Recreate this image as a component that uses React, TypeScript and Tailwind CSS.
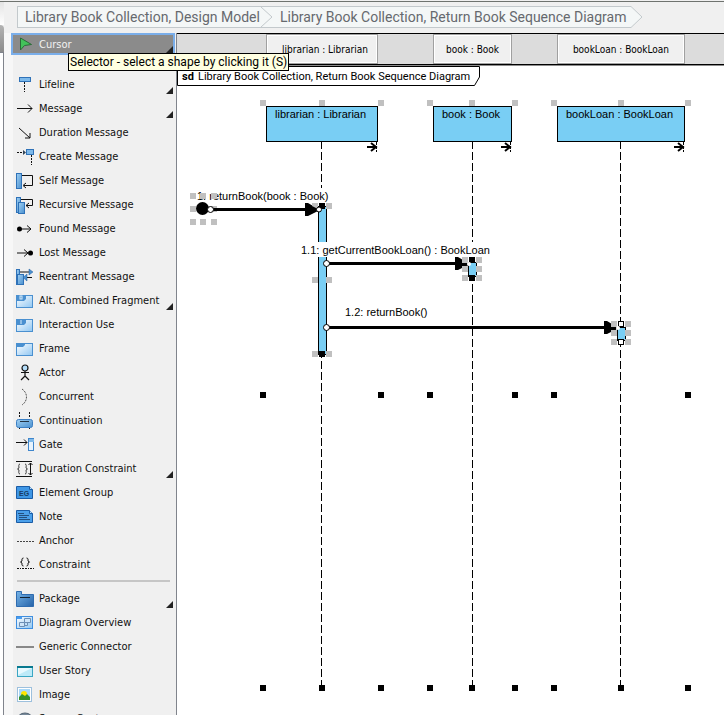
import type { ReactNode } from "react";

const BLUE = "#79cef4";

type Tool = { label: string; icon: ReactNode; more?: boolean };

function Icon({ children }: { children: ReactNode }) {
  return (
    <svg width="18" height="18" viewBox="0 0 18 18" fill="none" stroke="#111" className="shrink-0" aria-hidden="true">
      {children}
    </svg>
  );
}

function Gradients() {
  return (
    <svg width="0" height="0" className="absolute" aria-hidden="true">
      <defs>
        <linearGradient id="bar" x1="0" y1="0" x2="1" y2="1">
          <stop offset="0" stopColor="#9fd0f3" />
          <stop offset="1" stopColor="#4a90cf" />
        </linearGradient>
        <linearGradient id="pale" x1="0" y1="0" x2="1" y2="1">
          <stop offset="0" stopColor="#ffffff" />
          <stop offset="1" stopColor="#8fc6f2" />
        </linearGradient>
        <linearGradient id="folder" x1="0" y1="0" x2="1" y2="1">
          <stop offset="0" stopColor="#77b5e8" />
          <stop offset="1" stopColor="#2562a8" />
        </linearGradient>
      </defs>
    </svg>
  );
}

function FrameIcon({ mark }: { mark?: ReactNode }) {
  return (
    <Icon>
      <rect x="0.5" y="3.5" width="16" height="12" fill="url(#pale)" stroke="#4a90d0" />
      <path d={mark ? "M1 3h9v4l-2 2H1z" : "M1 3h8v2l-2 2H1z"} fill="#4a90d0" stroke="none" />
      {mark}
    </Icon>
  );
}

const tools: Tool[] = [
  {
    label: "Lifeline",
    more: true,
    icon: (
      <Icon>
        <rect x="3.5" y="1.5" width="11" height="4" fill="#7db9ea" stroke="#2f72b8" />
        <path d="M8.5 6v10" strokeDasharray="2 1" />
      </Icon>
    ),
  },
  {
    label: "Message",
    more: true,
    icon: (
      <Icon>
        <path d="M1 8.5h15M12 4.5l4 4-4 4" />
      </Icon>
    ),
  },
  {
    label: "Duration Message",
    icon: (
      <Icon>
        <path d="M3 4l11 10M14 9v5h-5" />
      </Icon>
    ),
  },
  {
    label: "Create Message",
    icon: (
      <Icon>
        <path d="M1 4.5h6" strokeDasharray="2 1" />
        <path d="M7 2l3 2.5-3 2.5z" fill="#345" stroke="none" />
        <rect x="10.5" y="1.5" width="7" height="5" fill="#7db9ea" stroke="#2f72b8" />
        <path d="M15.5 7v10" strokeDasharray="2 1" />
      </Icon>
    ),
  },
  {
    label: "Self Message",
    icon: (
      <Icon>
        <rect x="0.5" y="1.5" width="5" height="15" fill="url(#bar)" stroke="#2f72b8" />
        <path d="M6 3.5h10.500v10H8M10 11l-3 2.500 3 2.500" />
      </Icon>
    ),
  },
  {
    label: "Recursive Message",
    icon: (
      <Icon>
        <rect x="0.5" y="1.5" width="4" height="15" fill="url(#bar)" stroke="#2f72b8" />
        <rect x="2.5" y="6.5" width="6" height="11" fill="url(#bar)" stroke="#2f72b8" />
        <path d="M5 3.5h11.500v6H10M13 7l-3 2.500 3 2.500" />
      </Icon>
    ),
  },
  {
    label: "Found Message",
    icon: (
      <Icon>
        <circle cx="3.5" cy="9" r="2.500" fill="#000" stroke="none" />
        <path d="M5 9h10M11 5.500l4 3.500-4 3.500" />
      </Icon>
    ),
  },
  {
    label: "Lost Message",
    icon: (
      <Icon>
        <circle cx="14.5" cy="9" r="2.500" fill="#000" stroke="none" />
        <path d="M1 9h11M8 5.500l4 3.500-4 3.500" />
      </Icon>
    ),
  },
  {
    label: "Reentrant Message",
    icon: (
      <Icon>
        <rect x="0.5" y="1.5" width="3" height="15" fill="url(#bar)" stroke="#2f72b8" />
        <rect x="1.5" y="6.5" width="6" height="10" fill="url(#bar)" stroke="#2f72b8" />
        <path d="M4 4h10M8 9.500h8" />
        <path d="M13 1l4 3-4 3zM11 6v7l-4-3.500z" fill="#4a90cf" stroke="#235f9e" strokeWidth=".5" />
      </Icon>
    ),
  },
  {
    label: "Alt. Combined Fragment",
    more: true,
    icon: <FrameIcon mark={<rect x="4" y="4" width="2" height="3" stroke="#d5ebfb" />} />,
  },
  { label: "Interaction Use", icon: <FrameIcon mark={<path d="M5 4v4" stroke="#d5ebfb" />} /> },
  { label: "Frame", icon: <FrameIcon /> },
  {
    label: "Actor",
    icon: (
      <Icon>
        <circle cx="9" cy="4" r="3" fill="#b5defa" strokeWidth="1.200" />
        <path d="M9 7v5M5 8.500h8M9 12l-4 4M9 12l4 4" strokeWidth="1.200" />
      </Icon>
    ),
  },
  {
    label: "Concurrent",
    icon: (
      <Icon>
        <path d="M6 1c6 4 6 12 0 16" stroke="#555" strokeDasharray="2 1" />
      </Icon>
    ),
  },
  {
    label: "Continuation",
    icon: (
      <Icon>
        <path d="M3.500 0v6M13.500 0v6M3.500 15v3M13.500 15v3" strokeDasharray="2 1" />
        <rect x="0.500" y="7.500" width="16" height="8" rx="2" fill="url(#bar)" stroke="#3b7fc4" />
        <path d="M4 9.500h9" stroke="#234" />
      </Icon>
    ),
  },
  {
    label: "Gate",
    icon: (
      <Icon>
        <path d="M0 6.500h11M8 3.500l3 3-3 3" />
        <rect x="12.500" y="2.500" width="5" height="12" fill="#e7f3fd" stroke="#3f86cc" />
        <rect x="13" y="3" width="5" height="3" fill="#7db9ea" stroke="none" />
      </Icon>
    ),
  },
  {
    label: "Duration Constraint",
    more: true,
    icon: (
      <Icon>
        <path d="M0 1.500h16M0 16.500h16" />
        <path d="M4 4c-2 0-1 3-1 4l-1.500 1L3 10c0 1-1 4 1 4M9 4c2 0 1 3 1 4l1.500 1L10 10c0 1 1 4-1 4" stroke="#444" />
        <path d="M14.500 3v12M12.500 5l2-2 2 2M12.500 13l2 2 2-2" />
      </Icon>
    ),
  },
  {
    label: "Element Group",
    icon: (
      <Icon>
        <path d="M.5 2.500h13l3 3v9H.5z" fill="#3f97e6" stroke="#1a5ca6" />
        <path d="M13.500 2.500v3h3" fill="#bfe0fa" stroke="#1a5ca6" />
        <text x="3" y="12" fontSize="7" fontFamily="Liberation Sans, sans-serif" fontWeight="bold" fill="#173a63" stroke="none">EG</text>
      </Icon>
    ),
  },
  {
    label: "Note",
    icon: (
      <Icon>
        <path d="M.5 2.500h13l3 3v9H.5z" fill="#4ba0ea" stroke="#1a5ca6" />
        <path d="M13.500 2.500v3h3" fill="#bfe0fa" stroke="#1a5ca6" />
        <path d="M2 5.500h6M3 7.500h10M3 9.500h8M3 11.500h11" stroke="#24507f" />
      </Icon>
    ),
  },
  {
    label: "Anchor",
    icon: (
      <Icon>
        <path d="M1 9.500h17" stroke="#444" strokeDasharray="2 1" />
      </Icon>
    ),
  },
  {
    label: "Constraint",
    icon: (
      <Icon>
        <path d="M7.500 2c-2 0-1.500 2-1.500 3l-1.500 1L6 7c0 1-.5 3 1.500 3M10.500 2c2 0 1.500 2 1.500 3l1.500 1L12 7c0 1 .5 3-1.500 3" />
        <path d="M1 12.500h4M14 12.500h4M6 12.500h7" strokeDasharray="2 1" />
      </Icon>
    ),
  },
];

const generalTools: Tool[] = [
  {
    label: "Package",
    more: true,
    icon: (
      <Icon>
        <path d="M.5 1.500h5v3h12v12H.5z" fill="url(#folder)" stroke="#2f6cb0" />
        <path d="M4 7.500h10" stroke="#123" />
      </Icon>
    ),
  },
  {
    label: "Diagram Overview",
    icon: (
      <Icon>
        <rect x="0.500" y="2.500" width="16" height="12" fill="url(#pale)" stroke="#3f8fe0" />
        <path d="M1 3h5v2H1z" fill="#4a9df0" stroke="none" />
        <path d="M8.500 4.500h6v4h-6zM3.500 8.500h5v4h-5zM11.500 9v2.500H9" fill="#cfe6fa" stroke="#6d8fb5" />
      </Icon>
    ),
  },
  {
    label: "Generic Connector",
    icon: (
      <Icon>
        <path d="M0 9h18" stroke="#888" strokeWidth="2" />
      </Icon>
    ),
  },
  {
    label: "User Story",
    icon: (
      <Icon>
        <rect x="1.500" y="4.500" width="15" height="10" fill="#bdeaf8" stroke="#3ba7c4" />
        <path d="M2 6h14l-14 7z" fill="#e8f9fe" stroke="none" />
        <path d="M1 5h16" stroke="#08798f" strokeWidth="2" />
      </Icon>
    ),
  },
  {
    label: "Image",
    icon: (
      <Icon>
        <rect x="1.500" y="1.500" width="14" height="14" fill="#fff" stroke="#9dc0dd" />
        <rect x="3" y="3" width="11" height="11" fill="#a9d8f8" stroke="none" />
        <circle cx="8" cy="8" r="3" fill="#ffe500" stroke="none" />
        <path d="M3 14v-3l3-3 3 2 2-2 3 3v3z" fill="#36902c" stroke="none" />
      </Icon>
    ),
  },
  {
    label: "Screen Capture",
    icon: (
      <Icon>
        <ellipse cx="9" cy="10" rx="8" ry="7" fill="#77899a" stroke="#556575" />
        <circle cx="9" cy="11" r="4" fill="#a9cbe6" stroke="#445" />
      </Icon>
    ),
  },
];

function ToolRow({ label, icon, more }: Tool) {
  return (
    <li>
      <button type="button" className="relative flex h-6 w-full items-center gap-[5px] pl-[5px] text-left whitespace-nowrap">
        {icon}
        {label}
        {more && (
          <svg width="7" height="7" className="absolute right-[3px] bottom-[3px]" aria-hidden="true">
            <path d="M7 0v7H0z" fill="#222" />
          </svg>
        )}
      </button>
    </li>
  );
}

function Palette() {
  return (
    <aside className="w-[172px] shrink-0 bg-gradient-to-r from-[#f7f7f7] from-5% to-[#f0f0f0] to-5% pl-[7px] font-['DejaVu_Sans_Condensed','Noto_Sans',sans-serif] text-[11px] text-[#111]">
      <div className="relative mr-px">
        <button type="button" className="relative flex h-[22px] w-full items-center gap-[5px] border-2 border-[#7aaeea] bg-[#8b8b8b] pt-0.5 pl-[3px] text-[#f2f2f2]">
          <Icon>
            <path d="M4.500 2v12l4-4.500 7-1z" fill="#43c25a" stroke="#2b6b38" />
          </Icon>
          Cursor
          <svg width="7" height="7" className="absolute right-0 bottom-0" aria-hidden="true">
            <path d="M7 0v7H0z" fill="#222" />
          </svg>
        </button>
        <div role="tooltip" className="absolute top-5 left-[57px] z-10 flex h-[18px] items-center border border-black bg-[#ffffe1] px-px font-[Roboto,'Noto_Sans',sans-serif] text-xs whitespace-nowrap text-black">
          Selector - select a shape by clicking it (S)
        </div>
      </div>
      <ul className="mt-[18px]">
        {tools.map((t) => (
          <ToolRow key={t.label} {...t} />
        ))}
      </ul>
      <hr className="mx-1.5 mt-[3px] mb-[5px] h-0.5 border-0 bg-[#c6c6c6]" />
      <ul>
        {generalTools.map((t) => (
          <ToolRow key={t.label} {...t} />
        ))}
      </ul>
    </aside>
  );
}

function Breadcrumb() {
  const crumb = "flex items-center border-y border-[#c3c9cc] bg-[#f4f7f7] pl-[7px] hover:text-black";
  return (
    <nav aria-label="Breadcrumb" className="flex h-[22px] font-[Roboto,'Noto_Sans',sans-serif] text-sm whitespace-nowrap text-[#66696e]">
      <a href="#model" className={crumb + " border-l"}>
        Library Book Collection, Design Model
      </a>
      <svg width="13" height="22" fill="#f4f7f7" stroke="#c3c9cc" className="shrink-0" aria-hidden="true">
        <path d="M0 0h13v22H0z" stroke="none" />
        <path d="M0 .5h13M0 21.500h13" />
        <path d="M1 1l11 10-11 10" fill="none" />
      </svg>
      <a href="#diagram" className={crumb + " pr-1"}>
        Library Book Collection, Return Book Sequence Diagram
      </a>
      <svg width="13" height="22" fill="#f4f7f7" stroke="#c3c9cc" className="shrink-0" aria-hidden="true">
        <path d="M0 .5h1l11 10.500-11 10.500H0" />
      </svg>
    </nav>
  );
}

const lifelines = [
  { name: "librarian : Librarian", x: 266, w: 112, mid: 322, line: 321.5, left: 263, right: 381 },
  { name: "book : Book", x: 433, w: 79, mid: 472, line: 472.5, left: 430, right: 515 },
  { name: "bookLoan : BookLoan", x: 557, w: 128, mid: 621, line: 620.5, left: 554, right: 688 },
];

function Handle({ x, y, kind = "gray" }: { x: number; y: number; kind?: "gray" | "black" | "white" }) {
  if (kind === "white") return <rect x={x - 2.5} y={y - 2.5} width="5" height="5" fill="#fff" stroke="#000" />;
  return <rect x={x - 3} y={y - 3} width="6" height="6" fill={kind === "black" ? "#000" : "#c0c0c0"} />;
}

function Arrow({ from, to, y }: { from: number; to: number; y: number }) {
  return (
    <g>
      <rect x={from} y={y - 1} width={to - from - 10} height="3" />
      <path d={`M${to - 13} ${y - 6}h3l10 6v2l-10 5h-3z`} />
      <circle cx={from + 0.5} cy={y + 0.5} r="3" fill="#fff" stroke="#000" />
    </g>
  );
}

function Diagram() {
  return (
    <svg
      width="547"
      height="649"
      viewBox="177 66 547 649"
      role="img"
      aria-label="Return Book Sequence Diagram"
      className="block shrink-0 font-['Liberation_Sans',Arial,sans-serif] text-[11px]"
    >
      <path d="M177.500 66.500H479.500V77L474.500 85.500H177.500z" fill="#fff" stroke="#000" />
      <text x="182" y="80" className="font-[Roboto,sans-serif] font-bold">sd</text>
      <text x="198" y="80" className="font-[Roboto,sans-serif]">Library Book Collection, Return Book Sequence Diagram</text>

      {lifelines.map((l) => (
        <g key={l.name}>
          <path d={`M${l.line} 141V688`} stroke="#000" strokeDasharray="8 3" />
          <rect x={l.x + 0.5} y="106.5" width={l.w - 1} height="35" fill={BLUE} stroke="#000" />
          <text x={l.x + 9} y="118">{l.name}</text>
          <Handle x={l.left} y={103} />
          <Handle x={l.mid} y={103} />
          <Handle x={l.right} y={103} />
          <path d={`M${l.x + l.w - 11} 147h9M${l.x + l.w - 7} 143l5 4-5 4`} fill="none" stroke="#000" strokeWidth="2" />
          <path d={`M${l.x + l.w - 1.5} 142v10`} stroke="#000" strokeDasharray="3 1" />
          <Handle x={l.left} y={395} kind="black" />
          <Handle x={l.right} y={395} kind="black" />
          <Handle x={l.left} y={688} kind="black" />
          <Handle x={l.mid} y={688} kind="black" />
          <Handle x={l.right} y={688} kind="black" />
        </g>
      ))}

      <rect x="318.5" y="206.5" width="8" height="148" fill={BLUE} stroke="#000" />
      <rect x="468.5" y="262.5" width="8" height="14" fill={BLUE} stroke="#000" />
      <rect x="617.5" y="327.5" width="8" height="13" fill={BLUE} stroke="#000" />

      <rect x="197" y="188" width="134" height="15" fill="#fff" />
      <rect x="300" y="242" width="192" height="15" fill="#fff" />

      <text x="197" y="200">1: returnBook(book : Book)</text>
      <text x="301" y="254">1.1: getCurrentBookLoan() : BookLoan</text>
      <text x="345" y="316">1.2: returnBook()</text>

      {[193, 203, 214].map((x) => (
        <g key={x}>
          <Handle x={x} y={196} />
          <Handle x={x} y={209} />
          <Handle x={x} y={222} />
        </g>
      ))}
      <circle cx="202.5" cy="208.5" r="6.5" />
      <Arrow from={210} to={318} y={209} />
      <Arrow from={326} to={468} y={263} />
      <Arrow from={326} to={617} y={327} />

      {[315, 329].map((x) => (
        <g key={x}>
          <Handle x={x} y={206} />
          <Handle x={x} y={280} />
          <Handle x={x} y={354} />
        </g>
      ))}
      <Handle x={322} y={206} kind="black" />
      <Handle x={322} y={354} kind="black" />
      <path d="M310 205l8 4v1l-8 4z" />
      <circle cx="319" cy="209.5" r="2.5" fill="#fff" stroke="#000" />

      {[465, 479].map((x) => (
        <g key={x}>
          <Handle x={x} y={260} />
          <Handle x={x} y={269} />
          <Handle x={x} y={278} />
        </g>
      ))}
      <Handle x={472} y={260} kind="black" />
      <Handle x={472} y={278} kind="black" />
      <path d="M460 264l8 1" stroke="#000" strokeWidth="2" />
      <circle cx="469" cy="264" r="2" fill="#fff" />

      {[614, 628].map((x) => (
        <g key={x}>
          <Handle x={x} y={324} />
          <Handle x={x} y={333} />
          <Handle x={x} y={342} />
        </g>
      ))}
      <Handle x={621} y={324} kind="white" />
      <Handle x={621} y={342} kind="white" />
      <path d="M609 328l7 1" stroke="#000" strokeWidth="2" />
      <circle cx="618" cy="328" r="2" fill="#fff" />
    </svg>
  );
}

function LifelineHeader() {
  const cell = "flex shrink-0 items-center justify-center border border-[#a0a0a0] bg-[#f0f0f0] shadow-[inset_0_0_0_1px_#fff]";
  return (
    <header className="flex h-8 border-y border-black bg-[#dcdcdc] pl-[89px] font-['DejaVu_Sans_Condensed','Noto_Sans',sans-serif] text-[10px] whitespace-nowrap">
      <div className={cell + " w-28 pl-1.5"}>librarian : Librarian</div>
      <div className={cell + " ml-[55px] w-[79px]"}>book : Book</div>
      <div className={cell + " ml-[45px] w-32"}>bookLoan : BookLoan</div>
    </header>
  );
}

export default function App() {
  return (
    <div className="flex h-screen flex-col overflow-hidden bg-[#f0f0f0] text-black">
      <Gradients />
      <div className="mt-px h-px shrink-0 bg-[#6f736f]" />
      <div className="flex min-h-0 flex-1">
        <div className="flex w-1 shrink-0 flex-col">
          <div className="h-[23px] bg-gradient-to-b from-[#e4e4e4] to-white" />
          <div className="h-[27px] rounded-tr-sm bg-gradient-to-b from-[#b4b4b4] to-[#8c8c8c]" />
          <div className="flex-1 border-t border-r border-[#80848c] bg-white" />
        </div>
        <div className="flex min-w-0 flex-1 flex-col">
          <div className="h-[31px] shrink-0 pt-1 pl-[13px]">
            <Breadcrumb />
          </div>
          <div className="flex min-h-0 flex-1">
            <Palette />
            <main className="min-w-0 flex-1 overflow-hidden border-l border-[#80848c] bg-white">
              <LifelineHeader />
              <div className="h-px bg-[#8c8c8c]" />
              <Diagram />
            </main>
          </div>
        </div>
      </div>
    </div>
  );
}
